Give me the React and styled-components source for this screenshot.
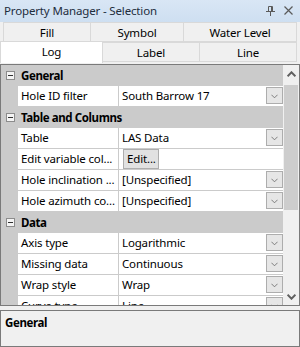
import React from 'react';
import styled, { createGlobalStyle } from 'styled-components';

const GlobalStyle = createGlobalStyle`
  html, body {
    margin: 0;
    padding: 0;
    background: #f0f0f0;
  }
  * {
    box-sizing: border-box;
  }
`;

const rows = [
  { type: 'cat', label: 'General' },
  { label: 'Hole ID filter', value: 'South Barrow 17', drop: true },
  { type: 'cat', label: 'Table and Columns' },
  { label: 'Table', value: 'LAS Data', drop: true },
  { label: 'Edit variable col...', button: 'Edit...' },
  { label: 'Hole inclination ...', value: '[Unspecified]', drop: true },
  { label: 'Hole azimuth co...', value: '[Unspecified]', drop: true },
  { type: 'cat', label: 'Data' },
  { label: 'Axis type', value: 'Logarithmic', drop: true },
  { label: 'Missing data', value: 'Continuous', drop: true },
  { label: 'Wrap style', value: 'Wrap', drop: true },
  { label: 'Curve type', value: 'Line', drop: true },
];

const Chevron = ({ up, size = 7, color = '#707070', width = 1 }) => (
  <svg width={size} height={Math.ceil(size / 2) + 1} viewBox="0 0 8 5">
    <polyline
      points={up ? '0.5,4.5 4,1 7.5,4.5' : '0.5,0.5 4,4 7.5,0.5'}
      fill="none"
      stroke={color}
      strokeWidth={width}
    />
  </svg>
);

const App = () => {
  return (
    <>
      <GlobalStyle />
      <Panel>
        <TitleBar>
          <Title>Property Manager - Selection</Title>
          <TitleIcons>
            <svg width="9" height="10" viewBox="0 0 9 10">
              <path d="M2.5 0.5h4v5h-4z M0 5.5h9 M4.5 6v4" fill="none" stroke="#5a5a5a" strokeWidth="1" />
              <path d="M5.5 1v4" stroke="#5a5a5a" strokeWidth="1" />
            </svg>
            <svg width="9" height="9" viewBox="0 0 9 9">
              <path d="M0.5 0.5l8 8M8.5 0.5l-8 8" stroke="#5a5a5a" strokeWidth="1.2" />
            </svg>
          </TitleIcons>
        </TitleBar>

        <Tabs>
          <TabRow $indent={3}>
            <Tab $w={88}>Fill</Tab>
            <Tab $w={93}>Symbol</Tab>
            <Tab $w={113}>Water Level</Tab>
          </TabRow>
          <TabRow $indent={0}>
            <Tab $w={103} $active>Log</Tab>
            <Tab $w={97}>Label</Tab>
            <Tab $w={97}>Line</Tab>
          </TabRow>
        </Tabs>

        <Grid>
          <List>
            {rows.map((r, i) =>
              r.type === 'cat' ? (
                <CatRow key={i}>
                  <Toggle>
                    <span />
                  </Toggle>
                  <CatLabel>{r.label}</CatLabel>
                </CatRow>
              ) : (
                <PropRow key={i}>
                  <Gutter />
                  <NameCell>{r.label}</NameCell>
                  <ValueCell>
                    {r.button ? (
                      <EditButton>{r.button}</EditButton>
                    ) : (
                      <ValueText>{r.value}</ValueText>
                    )}
                    {r.drop && (
                      <DropButton>
                        <Chevron />
                      </DropButton>
                    )}
                  </ValueCell>
                </PropRow>
              )
            )}
          </List>
          <ScrollBar>
            <ScrollArrow>
              <Chevron up size={9} color="#606060" width={1.8} />
            </ScrollArrow>
            <ScrollTrack>
              <Thumb />
            </ScrollTrack>
            <ScrollArrow>
              <Chevron size={9} color="#606060" width={1.8} />
            </ScrollArrow>
          </ScrollBar>
        </Grid>

        <Description>
          <DescTitle>General</DescTitle>
        </Description>
      </Panel>
    </>
  );
};

export default App;

const Panel = styled.div`
  width: 300px;
  height: 347px;
  display: flex;
  flex-direction: column;
  background: #f0f0f0;
  font-family: 'Segoe UI', 'Noto Sans', 'Open Sans', sans-serif;
  font-size: 11.5px;
  letter-spacing: -0.15px;
  color: #000;
`;

const TitleBar = styled.div`
  height: 22px;
  flex-shrink: 0;
  display: flex;
  align-items: center;
  justify-content: space-between;
  padding: 0 7px 1px 4px;
  background: linear-gradient(#d9e6f5, #cedff1);
`;

const Title = styled.div`
  color: #1e2d3d;
  white-space: nowrap;
`;

const TitleIcons = styled.div`
  display: flex;
  align-items: center;
  gap: 9px;
`;

const Tabs = styled.div`
  height: 42px;
  flex-shrink: 0;
`;

const TabRow = styled.div`
  display: flex;
  height: 20px;
  margin-left: ${(p) => p.$indent}px;
  align-items: flex-end;
`;

const Tab = styled.div`
  width: ${(p) => p.$w}px;
  height: ${(p) => (p.$active ? 22 : 20)}px;
  margin-bottom: ${(p) => (p.$active ? -1 : 0)}px;
  position: relative;
  z-index: ${(p) => (p.$active ? 1 : 0)};
  display: flex;
  align-items: center;
  justify-content: center;
  padding-bottom: ${(p) => (p.$active ? 2 : 0)}px;
  background: ${(p) => (p.$active ? '#ffffff' : '#f0f0f0')};
  border: 1px solid #d9d9d9;
  border-bottom: ${(p) => (p.$active ? 'none' : '1px solid #d9d9d9')};
  & + & {
    border-left: none;
  }
`;

const Grid = styled.div`
  height: 242px;
  flex-shrink: 0;
  border: 1px solid #7a7a7a;
  display: flex;
  background: #fff;
  overflow: hidden;
`;

const List = styled.div`
  width: 282px;
  flex-shrink: 0;
  overflow: hidden;
`;

const CatRow = styled.div`
  height: 21px;
  display: flex;
  align-items: center;
  background: #cbcbcb;
`;

const Toggle = styled.div`
  width: 9px;
  height: 9px;
  margin: 0 6px 0 5px;
  border: 1px solid #8c8c8c;
  background: #f4f4f4;
  display: flex;
  align-items: center;
  justify-content: center;
  span {
    width: 5px;
    height: 1px;
    background: #303030;
  }
`;

const CatLabel = styled.div`
  font-weight: bold;
  letter-spacing: -0.4px;
  padding-bottom: 1px;
`;

const PropRow = styled.div`
  height: 21px;
  display: flex;
`;

const Gutter = styled.div`
  width: 17px;
  flex-shrink: 0;
  background: #cbcbcb;
`;

const NameCell = styled.div`
  width: 101px;
  flex-shrink: 0;
  padding: 1px 0 0 3px;
  border-right: 1px solid #cbcbcb;
  border-bottom: 1px solid #cbcbcb;
  white-space: nowrap;
  overflow: hidden;
  line-height: 18px;
`;

const ValueCell = styled.div`
  flex: 1;
  display: flex;
  align-items: flex-start;
  border-bottom: 1px solid #cbcbcb;
  min-width: 0;
`;

const ValueText = styled.div`
  flex: 1;
  padding: 1px 0 0 3px;
  line-height: 18px;
  white-space: nowrap;
  overflow: hidden;
`;

const DropButton = styled.div`
  width: 17px;
  height: 17px;
  margin-top: 1px;
  flex-shrink: 0;
  border: 1px solid #adadad;
  background: #e6e6e6;
  display: flex;
  align-items: center;
  justify-content: center;
  padding-top: 1px;
`;

const EditButton = styled.div`
  width: 36px;
  height: 20px;
  margin: 0 0 0 4px;
  border: 1px solid #adadad;
  background: #e1e1e1;
  padding-left: 3px;
  line-height: 17px;
`;

const ScrollBar = styled.div`
  width: 16px;
  flex-shrink: 0;
  display: flex;
  flex-direction: column;
  background: #f0f0f0;
`;

const ScrollArrow = styled.div`
  height: 17px;
  flex-shrink: 0;
  display: flex;
  align-items: center;
  justify-content: center;
`;

const ScrollTrack = styled.div`
  flex: 1;
  padding: 3px 1px 0 1px;
`;

const Thumb = styled.div`
  height: 125px;
  background: #cdcdcd;
`;

const Description = styled.div`
  height: 37px;
  margin-top: 4px;
  flex-shrink: 0;
  border: 1px solid #7a7a7a;
  padding: 4px 4px;
`;

const DescTitle = styled.div`
  font-weight: bold;
  letter-spacing: -0.4px;
`;
